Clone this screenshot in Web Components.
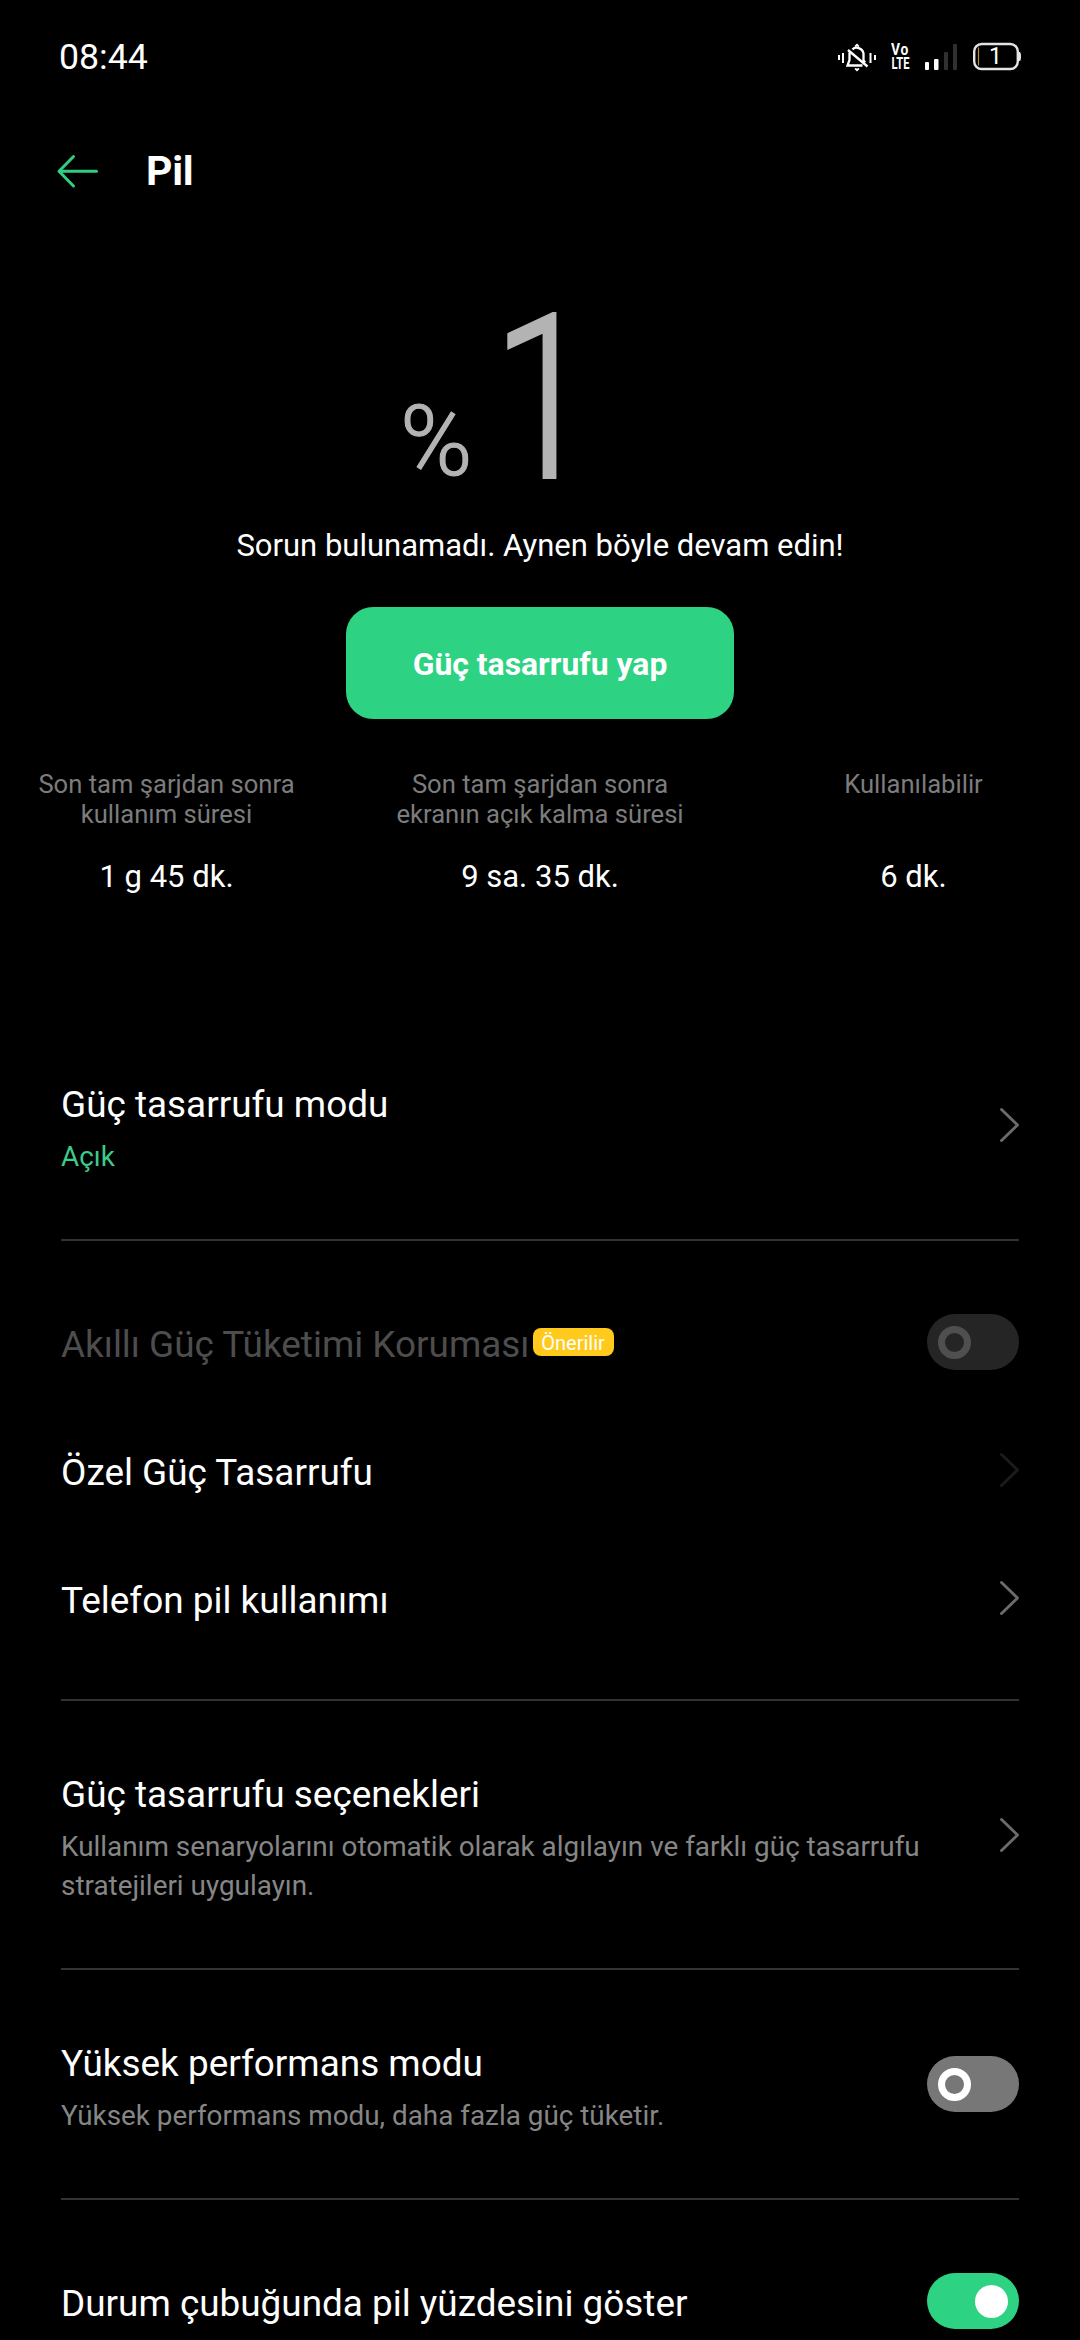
<!DOCTYPE html>
<html lang="tr">
<head>
<meta charset="utf-8">
<title>Pil</title>
<style>
html,body{margin:0;background:#000}
body{width:1080px;height:2340px;overflow:hidden;font-family:Roboto,"Noto Sans",sans-serif;color:#fff}
</style>
</head>
<body>
<battery-screen></battery-screen>
<script>
const define=(name,html,init)=>customElements.define(name,class extends HTMLElement{
  constructor(){super();this.attachShadow({mode:'open'}).innerHTML=html;}
  connectedCallback(){if(init)init(this,this.shadowRoot);}
});

define('status-bar',`<style>
:host{display:flex;height:114px;box-sizing:border-box;padding:32px 58px 0 59px;justify-content:space-between;align-items:flex-start}
.clock{font-size:35.700px;line-height:50px}
.icons{display:flex;height:50px}
svg{display:block}
.volte{width:20px;margin:0 13px 0 13px;padding-top:11px;box-sizing:border-box;font-weight:700;font-size:16.500px;line-height:14px}
.volte span{display:block;transform-origin:0 50%;white-space:nowrap}
.v{transform:scaleX(.84);letter-spacing:1px}.l{transform:translateX(.5px) scaleX(.68)}
.batt{display:grid;margin-left:14px}
.batt>*{grid-area:1/1}
.batt span{font-size:23px;line-height:50px;padding-left:17px}
</style>
<span class="clock">08:44</span>
<div class="icons">
<svg width="42" height="50" viewBox="835 32 42 50" fill="none" stroke="#fff" stroke-width="2">
<path d="M838 55v5M842 53v10M869.500 53v10M874 55v5"/>
<path d="M848.500 52.500V60L846.500 65.500H861.500M851.500 49.500C854.500 46 861.500 48 862.500 53.500V60L864 62.500M847 50L866.500 66.500" stroke-width="2.300"/>
<path d="M854 46.500L856 44.500L858 46.500M854 68.500L856 70.500L858 68.500" fill="#fff" stroke-width="1.500"/>
</svg>
<div class="volte"><span class="v">Vo</span><span class="l">LTE</span></div>
<svg width="34" height="50" viewBox="924 32 34 50">
<g fill="#fff"><rect x="925" y="62" width="4" height="8" rx="1"/><rect x="934" y="59" width="4.500" height="11" rx="1"/></g>
<g fill="#303030"><rect x="944" y="52" width="4" height="18" rx="1"/><rect x="953" y="44" width="4" height="26" rx="1"/></g>
</svg>
<div class="batt"><svg width="50" height="50" viewBox="972 32 50 50" fill="none">
<rect x="974.200" y="44" width="43.600" height="25" rx="7.500" stroke="#e4e4e4" stroke-width="2.400"/>
<path d="M1018 52h1.500q1.500 0 1.500 4.500t-1.500 4.500h-1.500z" fill="#e4e4e4"/>
<path d="M978.500 47.500v18" stroke="#b98a3e" stroke-width="1.200"/></svg><span>1</span></div>
</div>`);

define('title-bar',`<style>
:host{display:flex;height:114px;align-items:center;padding-left:56px;gap:47px}
h1{margin:0;font-size:41px;line-height:50px;font-weight:700;letter-spacing:-.3px}
svg{display:block}
</style>
<svg width="43" height="36" viewBox="0 0 43 36" fill="none" stroke="#2fce83" stroke-width="3" stroke-linecap="round" stroke-linejoin="round"><path d="M17.500 3.500L3 18.300L17.500 33M3 18.300H40.500"/></svg>
<h1><slot></slot></h1>`);

define('battery-level',`<style>
:host{display:flex;height:286px;color:#b3b3b3;font-weight:300;padding-left:400px;align-items:flex-start}
.p{font-size:98px;line-height:120px;margin-top:154px;width:93px;-webkit-text-stroke:1.200px #b3b3b3}
.n{font-size:228px;line-height:240px;margin-top:51px;transform:scaleX(.8);transform-origin:0 50%;-webkit-text-stroke:4px #b3b3b3}
</style><span class="p">%</span><span class="n"><slot></slot></span>`);

define('action-button',`<style>
:host{display:block}
button{display:block;width:388px;height:112px;border:0;border-radius:27px;background:#2dd283;color:#fff;font:700 31.900px/112px Roboto,sans-serif;padding:1px 0 0;margin:0}
</style><button><slot></slot></button>`);

define('usage-stat',`<style>
:host{display:flex;flex-direction:column;align-items:center;width:var(--w);text-align:center}
.label{height:60px;font-size:25.600px;line-height:30px;color:#7c7c7c;white-space:pre-line}
.value{font-size:31px;line-height:40px;margin-top:28px}
</style><div class="label"></div><div class="value"><slot></slot></div>`,
(e,r)=>{r.querySelector('.label').textContent=e.getAttribute('label').replace('|','\n');});

define('toggle-switch',`<style>
:host{display:flex;width:92px;height:56px;border-radius:28px;background:#777;box-sizing:border-box;padding:11px;align-items:center}
i{display:block;box-sizing:border-box;width:33px;height:33px;border-radius:50%;border:7px solid #fff}
:host([disabled]){background:#252525}
:host([disabled]) i{border-color:#4f4f4f}
:host([on]){background:#2dd283;justify-content:flex-end}
:host([on]) i{background:#fff}
</style><i></i>`);

define('chevron-icon',`<style>
:host{display:block;color:#6b6b6b}
:host([disabled]){color:#1c1c1c}
svg{display:block}
</style><svg width="20" height="36" viewBox="0 0 20 36" fill="none" stroke="currentColor" stroke-width="2.900" stroke-linecap="round" stroke-linejoin="round"><path d="M2.500 2.500L18.500 18L2.500 33.500"/></svg>`);

define('tag-badge',`<style>
:host{display:block;width:81px;height:28px;border-radius:8px;background:#ffca1c;color:#fff;font-size:20px;line-height:30px;text-align:center}
</style><slot></slot>`);

define('setting-row',`<style>
:host{display:flex;align-items:center;justify-content:space-between;min-height:var(--row,128px)}
.t{display:flex;align-items:center;font-size:36.900px;line-height:48px;padding-top:2px;white-space:nowrap}
:host([disabled]) .t{color:#4d4d4d}
::slotted(tag-badge){margin:0 0 6px 3px}
.s{margin-top:8px;font-size:27.860px;line-height:39px;color:#868686;width:864px}
:host([accent]) .s{color:#3ccb88}
.end{padding-bottom:4px;flex:none}
:host([note]) .end{padding-bottom:5px}
</style><div><div class="t"><span></span><slot name="badge"></slot></div></div><div class="end"><slot></slot></div>`,
(e,r)=>{r.querySelector('.t span').textContent=e.getAttribute('heading');
if(e.hasAttribute('note')){const s=document.createElement('div');s.className='s';s.textContent=e.getAttribute('note');r.querySelector('div').append(s);e.style.setProperty('--row','0px');}});

define('setting-group',`<style>
:host{display:block;margin:0 61px;padding:39px 0 35px;border-bottom:2px solid #333}
:host([detailed]){padding:68px 0 63px}
:host(:last-of-type){border:0}
</style><slot></slot>`);

define('battery-screen',`<style>
:host{display:block}
.msg{text-align:center;font-size:31px;line-height:40px;height:40px;margin-top:12px}
.btn{display:flex;justify-content:center;margin-top:41px}
.stats{display:flex;height:292px;padding-top:50px;box-sizing:border-box}
</style>
<status-bar></status-bar>
<title-bar>Pil</title-bar>
<battery-level>1</battery-level>
<div class="msg">Sorun bulunamadı. Aynen böyle devam edin!</div>
<div class="btn"><action-button>Güç tasarrufu yap</action-button></div>
<div class="stats">
<usage-stat style="--w:333px" label="Son tam şarjdan sonra|kullanım süresi">1 g 45 dk.</usage-stat>
<usage-stat style="--w:414px" label="Son tam şarjdan sonra|ekranın açık kalma süresi">9 sa. 35 dk.</usage-stat>
<usage-stat style="--w:333px" label="Kullanılabilir">6 dk.</usage-stat>
</div>
<main>
<setting-group detailed><setting-row accent heading="Güç tasarrufu modu" note="Açık"><chevron-icon></chevron-icon></setting-row></setting-group>
<setting-group>
<setting-row disabled heading="Akıllı Güç Tüketimi Koruması"><tag-badge slot="badge">Önerilir</tag-badge><toggle-switch disabled></toggle-switch></setting-row>
<setting-row heading="Özel Güç Tasarrufu"><chevron-icon disabled></chevron-icon></setting-row>
<setting-row heading="Telefon pil kullanımı"><chevron-icon></chevron-icon></setting-row>
</setting-group>
<setting-group detailed><setting-row heading="Güç tasarrufu seçenekleri" note="Kullanım senaryolarını otomatik olarak algılayın ve farklı güç tasarrufu stratejileri uygulayın."><chevron-icon></chevron-icon></setting-row></setting-group>
<setting-group detailed><setting-row heading="Yüksek performans modu" note="Yüksek performans modu, daha fazla güç tüketir."><toggle-switch></toggle-switch></setting-row></setting-group>
<setting-group><setting-row heading="Durum çubuğunda pil yüzdesini göster"><toggle-switch on></toggle-switch></setting-row></setting-group>
</main>`);
</script>
</body>
</html>
